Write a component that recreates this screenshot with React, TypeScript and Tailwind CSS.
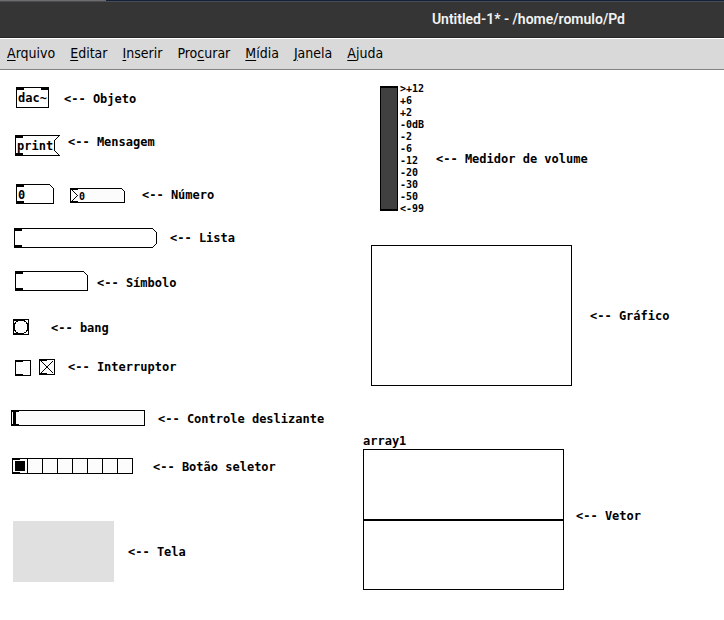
import type { ReactNode } from "react";

type Entry = { before?: string; key: string; after: string };

const menu: Entry[] = [
  { key: "A", after: "rquivo" },
  { key: "E", after: "ditar" },
  { key: "I", after: "nserir" },
  { before: "Pro", key: "c", after: "urar" },
  { key: "M", after: "ídia" },
  { key: "J", after: "anela" },
  { key: "A", after: "juda" },
];

const levels = [">+12", "+6", "+2", "-0dB", "-2", "-6", "-12", "-20", "-30", "-50", "<-99"];

/** Comment text on the patch, tied to the control it describes. */
function Note({ at, target, children }: { at: string; target?: string; children: string }) {
  const text = "absolute whitespace-pre text-xs font-bold leading-4 " + at;
  return target ? (
    <label htmlFor={target} className={text}>{children}</label>
  ) : (
    <p className={text}>{children}</p>
  );
}

/** Outline and ports of a patch object, drawn on the pixel grid. */
function Outline({ w, h, d, port = 3, out = true, children }: {
  w: number; h: number; d: string; port?: number; out?: boolean; children?: ReactNode;
}) {
  return (
    <svg width={w} height={h} aria-hidden="true" shapeRendering="crispEdges" className="pointer-events-none absolute inset-0" fill="none" stroke="#000">
      <path d={d} />
      <rect width="8" height={port} fill="#000" stroke="none" />
      {out && <rect y={h - port} width="8" height={port} fill="#000" stroke="none" />}
      {children}
    </svg>
  );
}

const field = "block size-full border-0 bg-transparent p-0 font-bold outline-none";

export default function App() {
  return (
    <div className="flex min-h-screen flex-col bg-white text-black">
      <header>
        <div className="h-px bg-[#141f3a]">
          <div className="h-px w-[106px] bg-[#6c6c6c]" />
        </div>
        <div className="flex h-[37px] items-center justify-end border-t border-b border-t-[#4a4d52] border-b-[#262626] bg-[#353535] pb-0.5 pr-[99px]">
          <h1 className="font-[Roboto,'Open_Sans',sans-serif] text-sm font-semibold leading-5 text-[#f2f2f2]">
            Untitled-1* - /home/romulo/Pd
          </h1>
        </div>
        <nav className="flex h-8 items-center gap-[15px] border-t border-b border-t-white border-b-[#828282] bg-[#d9d9d9] px-[7px] pb-0.5 font-['DejaVu_Sans_Condensed','DejaVu_Sans',sans-serif] text-sm">
          {menu.map((m) => (
            <button key={m.key + m.after} type="button" className="leading-5">
              {m.before}
              <span className="underline underline-offset-2">{m.key}</span>
              {m.after}
            </button>
          ))}
        </nav>
      </header>

      <main className="relative min-h-[550px] flex-1 font-['DejaVu_Sans_Mono','Liberation_Mono',monospace]">
        <div className="absolute left-4 top-[17px] h-[21px] w-[33px]">
          <Outline w={33} h={21} d="M.5 .5H32.5V20.5H.5Z" out={false}>
            <rect x="25" width="8" height="3" fill="#000" stroke="none" />
          </Outline>
          <p className="pl-0.5 pt-[3px] text-xs font-bold leading-4">dac~</p>
        </div>
        <Note at="left-16 top-[21px]">{"<-- Objeto"}</Note>

        <div className="absolute left-[15px] top-[65px] h-[21px] w-[45px]">
          <Outline w={45} h={21} d="M44.5 .5H.5V20.5H44.5L39.5 15.5V5.5L44.5 .5" />
          <button id="message" type="button" className="block size-full pl-0.5 pt-px text-left text-xs font-bold leading-4">print</button>
        </div>
        <Note at="left-[68px] top-16" target="message">{"<-- Mensagem"}</Note>

        <div className="absolute left-4 top-[114px] h-5 w-[38px]">
          <Outline w={38} h={20} d="M.5 .5H33.5L37.5 4.5V19.5H.5Z" />
          <input id="number" defaultValue="0" className={field + " pl-0.5 pt-0.5 text-xs"} />
        </div>
        <div className="absolute left-[70px] top-[118px] h-[15px] w-[55px] bg-[#fcfcfc]">
          <Outline w={55} h={15} d="M.5 .5H51.5L54.5 3.5V14.5H.5Z" port={2}>
            <path d="M.5 .5L7.5 7.5L.5 14.5" />
          </Outline>
          <input aria-label="Número 2" defaultValue="0" className={field + " pl-[9px] pt-px text-[10px]"} />
        </div>
        <Note at="left-[142px] top-[117px]" target="number">{"<-- Número"}</Note>

        <div className="absolute left-3.5 top-[158px] h-5 w-[143px]">
          <Outline w={143} h={20} d="M.5 .5H138.5L142.5 4.5V15.5L138.5 19.5H.5Z" />
          <input id="list" className={field + " pl-0.5 text-xs"} />
        </div>
        <Note at="left-[170px] top-40" target="list">{"<-- Lista"}</Note>

        <div className="absolute left-[15px] top-[201px] h-5 w-[73px]">
          <Outline w={73} h={20} d="M.5 .5H68.5L72.5 4.5V19.5H.5Z" />
          <input id="symbol" className={field + " pl-0.5 text-xs"} />
        </div>
        <Note at="left-[97px] top-[205px]" target="symbol">{"<-- Símbolo"}</Note>

        <div className="absolute left-[13px] top-[249px] size-4">
          <button id="bang" type="button" aria-label="bang" className="block size-full bg-[#fcfcfc]" />
          <Outline w={16} h={16} d="M.5 .5H15.5V15.5H.5Z" port={2}>
            <circle cx="8" cy="8" r="7" />
          </Outline>
        </div>
        <Note at="left-[51px] top-[250px]" target="bang">{"<-- bang"}</Note>

        <div className="absolute left-[15px] top-[290px] size-4">
          <input id="toggle" type="checkbox" className="block size-full appearance-none bg-[#fcfcfc]" />
          <Outline w={16} h={16} d="M.5 .5H15.5V15.5H.5Z" port={2} />
        </div>
        <div className="absolute left-[39px] top-[289px] size-4">
          <input aria-label="Interruptor 2" type="checkbox" defaultChecked className="block size-full appearance-none bg-[#fcfcfc]" />
          <Outline w={16} h={16} d="M.5 .5H15.5V15.5H.5Z" port={2}>
            <path d="M2 2L14 14M14 2L2 14" />
          </Outline>
        </div>
        <Note at="left-[68px] top-[289px]" target="toggle">{"<-- Interruptor"}</Note>

        <div className="absolute left-[11px] top-[340px] h-4 w-[134px]">
          <input
            id="slider"
            type="range"
            defaultValue={0}
            className="block size-full appearance-none bg-[#fcfcfc] px-0.5 [&::-webkit-slider-thumb]:h-4 [&::-webkit-slider-thumb]:w-[3px] [&::-webkit-slider-thumb]:appearance-none [&::-webkit-slider-thumb]:bg-black"
          />
          <Outline w={134} h={16} d="M.5 .5H133.5V15.5H.5Z" port={2} />
        </div>
        <Note at="left-[158px] top-[341px]" target="slider">{"<-- Controle deslizante"}</Note>

        <div role="radiogroup" aria-label="Botão seletor" className="absolute left-3 top-[388px] flex h-4 w-[121px] border border-black bg-[#fcfcfc]">
          {[0, 1, 2, 3, 4, 5, 6, 7].map((n) => (
            <input
              key={n}
              id={"cell" + n}
              type="radio"
              name="selector"
              aria-label={"Opção " + n}
              defaultChecked={n === 0}
              className="h-3.5 w-[15px] appearance-none border-l border-black bg-clip-content p-0.5 first:w-3.5 first:border-l-0 checked:bg-black"
            />
          ))}
          <span className="absolute left-0 top-0 h-px w-[7px] bg-black" />
          <span className="absolute bottom-0 left-0 h-px w-[7px] bg-black" />
        </div>
        <Note at="left-[153px] top-[389px]" target="cell0">{"<-- Botão seletor"}</Note>

        <div className="absolute left-[13px] top-[451px] h-[61px] w-[101px] bg-[#e0e0e0]" />
        <Note at="left-32 top-[474px]">{"<-- Tela"}</Note>

        <div className="absolute left-[380px] top-4 flex gap-0.5">
          <div className="h-[125px] w-[18px] border-x border-y-2 border-black bg-[#404040]" />
          <ul className="-mt-[3px] text-[10px] font-bold leading-3">
            {levels.map((l) => (
              <li key={l}>{l}</li>
            ))}
          </ul>
        </div>
        <Note at="left-[436px] top-[81px]">{"<-- Medidor de volume"}</Note>

        <div className="absolute left-[371px] top-[175px] h-[141px] w-[201px] border border-black" />
        <Note at="left-[590px] top-[238px]">{"<-- Gráfico"}</Note>

        <figure className="absolute left-[363px] top-[363px]">
          <figcaption className="text-xs font-bold leading-4">array1</figcaption>
          <div className="flex h-[141px] w-[201px] flex-col justify-center border border-black">
            <div className="h-0.5 bg-black" />
          </div>
        </figure>
        <Note at="left-[576px] top-[438px]">{"<-- Vetor"}</Note>
      </main>
    </div>
  );
}
